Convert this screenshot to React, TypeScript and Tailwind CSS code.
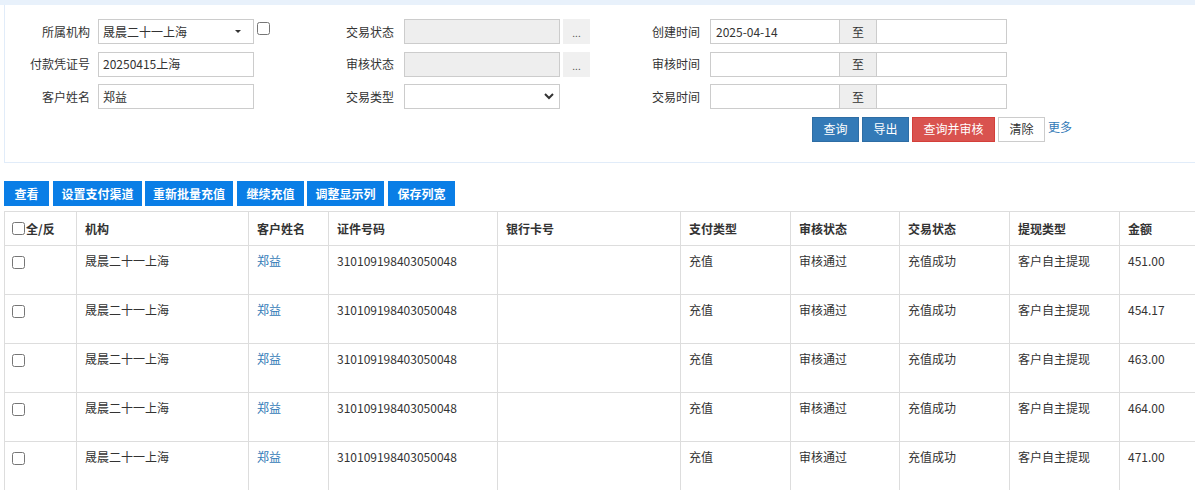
import React from "react";

const font = { fontFamily: '"Noto Sans CJK SC", "Noto Sans", sans-serif' };

function Label({ w, children }: { w: string; children: React.ReactNode }) {
  return <div className={`${w} shrink-0 whitespace-nowrap text-right text-[12px] text-[#333]`}>{children}</div>;
}

function Dots() {
  return (
    <div className="ml-[3px] flex h-[25px] w-[27px] shrink-0 items-end justify-center bg-[#f0f0f0] pb-[6px] text-[10px] leading-none text-[#555]">
      ...
    </div>
  );
}

function DateRange({ value }: { value?: string }) {
  return (
    <div className="ml-[10px] flex h-[25px] shrink-0">
      <div className="flex h-[25px] w-[130px] items-center border border-[#ccc] bg-white pl-[5px] text-[12px] text-[#333]">
        {value}
      </div>
      <div className="flex h-[25px] w-[36px] items-center justify-center border-y border-[#ccc] bg-[#eee] text-[12px] text-[#333]">
        至
      </div>
      <div className="h-[25px] w-[131px] border border-[#ccc] bg-white" />
    </div>
  );
}

const cols = [73, 172, 80, 169, 183, 110, 109, 110, 110, 110];
const headers = ["全/反", "机构", "客户姓名", "证件号码", "银行卡号", "支付类型", "审核状态", "交易状态", "提现类型", "金额"];
const amounts = ["451.00", "454.17", "463.00", "464.00", "471.00"];

export default function App() {
  return (
    <div style={font} className="relative h-[490px] w-[1195px] overflow-hidden bg-white text-[12px] text-[#333]">
      <div className="h-[5px] w-full bg-[#e8f1fb]" />
      <div className="ml-[4px] h-[158px] border-b border-l border-[#e1ecf9] bg-white pt-[14px]">
        <div className="flex flex-col gap-[7.5px]">
          {/* row 1 */}
          <div className="flex h-[25px] items-center">
            <Label w="w-[85px]">所属机构</Label>
            <div className="ml-[8px] flex h-[25px] w-[156px] shrink-0 items-center justify-between border border-[#ccc] bg-white pl-[4px] pr-[12px] text-[12px] text-[#333]">
              <span>晟晨二十一上海</span>
              <span className="h-0 w-0 border-x-[3px] border-t-[3px] border-x-transparent border-t-[#333]" />
            </div>
            <div className="w-[83px] shrink-0 self-start pl-[3px] pt-[3px]">
              <input type="checkbox" className="m-0 block h-[13px] w-[13px]" />
            </div>
            <Label w="w-[57px]">交易状态</Label>
            <div className="ml-[10px] h-[25px] w-[156px] shrink-0 border border-[#ccc] bg-[#eee]" />
            <Dots />
            <Label w="w-[110px]">创建时间</Label>
            <DateRange value="2025-04-14" />
          </div>
          {/* row 2 */}
          <div className="flex h-[25px] items-center">
            <Label w="w-[85px]">付款凭证号</Label>
            <div className="ml-[8px] flex h-[25px] w-[156px] shrink-0 items-center border border-[#ccc] bg-white pl-[4px] text-[12px] text-[#333]">
              20250415上海
            </div>
            <div className="w-[83px] shrink-0" />
            <Label w="w-[57px]">审核状态</Label>
            <div className="ml-[10px] h-[25px] w-[156px] shrink-0 border border-[#ccc] bg-[#eee]" />
            <Dots />
            <Label w="w-[110px]">审核时间</Label>
            <DateRange />
          </div>
          {/* row 3 */}
          <div className="flex h-[25px] items-center">
            <Label w="w-[85px]">客户姓名</Label>
            <div className="ml-[8px] flex h-[25px] w-[156px] shrink-0 items-center border border-[#ccc] bg-white pl-[4px] text-[12px] text-[#333]">
              郑益
            </div>
            <div className="w-[83px] shrink-0" />
            <Label w="w-[57px]">交易类型</Label>
            <div className="ml-[10px] flex h-[25px] w-[156px] shrink-0 items-center justify-end border border-[#ccc] bg-white pr-[5px]">
              <svg width="10" height="7" viewBox="0 0 10 7">
                <polyline points="1,1 5,5 9,1" fill="none" stroke="#333" strokeWidth="2" />
              </svg>
            </div>
            <div className="ml-[3px] w-[27px] shrink-0" />
            <Label w="w-[110px]">交易时间</Label>
            <DateRange />
          </div>
          {/* buttons */}
          <div className="flex h-[25px] items-center pl-[807px]">
            <div className="flex h-[25px] w-[47px] items-center justify-center border border-[#2e6da4] bg-[#337ab7] text-[12px] text-white">查询</div>
            <div className="ml-[3px] flex h-[25px] w-[47px] items-center justify-center border border-[#2e6da4] bg-[#337ab7] text-[12px] text-white">导出</div>
            <div className="ml-[3px] flex h-[25px] w-[83px] items-center justify-center border border-[#d43f3a] bg-[#d9534f] text-[12px] text-white">查询并审核</div>
            <div className="ml-[3px] flex h-[25px] w-[47px] items-center justify-center border border-[#ccc] bg-white text-[12px] text-[#333]">清除</div>
            <div className="ml-[3px] self-start pt-[1px] text-[12px] text-[#337ab7]">更多</div>
          </div>
        </div>
      </div>

      {/* toolbar */}
      <div className="ml-[4px] mt-[18px] flex h-[25px] gap-[3px]">
        {[
          ["查看", "w-[45px]"],
          ["设置支付渠道", "w-[89px] ml-[1px]"],
          ["重新批量充值", "w-[88px]"],
          ["继续充值", "w-[67px] ml-[1px]"],
          ["调整显示列", "w-[77px]"],
          ["保存列宽", "w-[67px] ml-[1px]"],
        ].map(([t, w]) => (
          <div key={t} className={`${w} flex h-[25px] items-center justify-center bg-[#0a7ee6] text-[12px] font-bold text-white`}>
            {t}
          </div>
        ))}
      </div>

      {/* table */}
      <div className="ml-[4px] mt-[5px] w-max">
        <div className="flex">
          {headers.map((h, i) => (
            <div
              key={h}
              style={{ width: cols[i] }}
              className={`flex h-[35px] shrink-0 items-center border-y border-r border-[#ddd] px-[8px] text-[12px] font-bold text-[#333] ${i === 0 ? "border-l" : ""}`}
            >
              {i === 0 ? (
                <>
                  <input type="checkbox" className="m-0 -ml-[1px] mr-[1px] h-[13px] w-[13px]" />
                  {h}
                </>
              ) : (
                h
              )}
            </div>
          ))}
        </div>
        {amounts.map((amt, r) => {
          const vals = ["", "晟晨二十一上海", "郑益", "310109198403050048", "", "充值", "审核通过", "充值成功", "客户自主提现", amt];
          return (
            <div key={r} className="flex">
              {vals.map((v, i) => (
                <div
                  key={i}
                  style={{ width: cols[i] }}
                  className={`h-[49px] shrink-0 border-b border-r border-[#ddd] px-[8px] pt-[6px] text-[12px] leading-[18px] ${i === 0 ? "border-l" : ""} ${i === 2 ? "text-[#337ab7]" : "text-[#333]"}`}
                >
                  {i === 0 ? <input type="checkbox" className="m-0 -ml-[1px] mt-[4px] block h-[13px] w-[13px]" /> : v}
                </div>
              ))}
            </div>
          );
        })}
      </div>
    </div>
  );
}
